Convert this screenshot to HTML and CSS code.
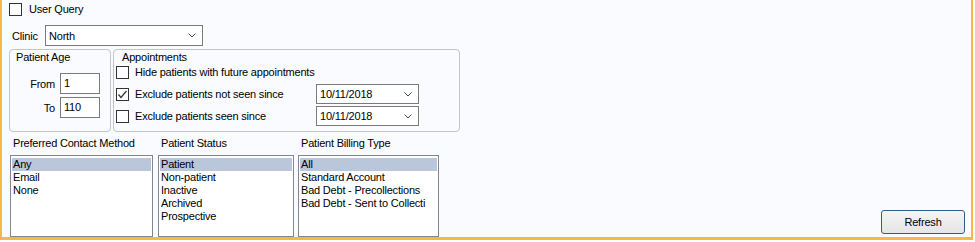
FILE: index.html
```html
<!DOCTYPE html>
<html lang="en">
<head>
  <meta charset="UTF-8">
  <title>Patient Query</title>
  <link rel="stylesheet" href="styles.css">
</head>
<body>

<div class="panel">
  <!-- User query toggle -->
  <div class="row-query">
    <span class="check"></span>
    <span>User Query</span>
  </div>

  <!-- Clinic -->
  <div class="row-clinic">
    <span class="clinic-label">Clinic</span>
    <div class="combo clinic-combo">
      <span>North</span>
      <svg class="chev" width="8" height="5" viewBox="0 0 8 5"><polyline points="0.5,0.5 4,4 7.5,0.5" fill="none" stroke="#444" stroke-width="1"/></svg>
    </div>
  </div>

  <!-- Groups -->
  <div class="row-groups">
    <div class="group age-group">
      <div class="group-title">Patient Age</div>
      <div class="age-line">
        <span class="age-label">From</span>
        <div class="textbox">1</div>
      </div>
      <div class="age-line">
        <span class="age-label">To</span>
        <div class="textbox">110</div>
      </div>
    </div>

    <div class="group appt-group">
      <div class="group-title">Appointments</div>
      <div class="appt-line">
        <span class="check"></span>
        <span>Hide patients with future appointments</span>
      </div>
      <div class="appt-line">
        <span class="check">
          <svg width="11" height="11" viewBox="0 0 11 11"><polyline points="1.5,5.5 4,8.5 9.5,2" fill="none" stroke="#333" stroke-width="1.2"/></svg>
        </span>
        <span class="appt-text">Exclude patients not seen since</span>
        <div class="combo date-combo">
          <span>10/11/2018</span>
          <svg class="chev" width="8" height="5" viewBox="0 0 8 5"><polyline points="0.5,0.5 4,4 7.5,0.5" fill="none" stroke="#444" stroke-width="1"/></svg>
        </div>
      </div>
      <div class="appt-line">
        <span class="check"></span>
        <span class="appt-text">Exclude patients seen since</span>
        <div class="combo date-combo">
          <span>10/11/2018</span>
          <svg class="chev" width="8" height="5" viewBox="0 0 8 5"><polyline points="0.5,0.5 4,4 7.5,0.5" fill="none" stroke="#444" stroke-width="1"/></svg>
        </div>
      </div>
    </div>
  </div>

  <!-- Lists and refresh -->
  <div class="row-lists">
    <div class="list-col contact-col">
      <div class="list-label">Preferred Contact Method</div>
      <div class="listbox">
        <div class="item selected">Any</div>
        <div class="item">Email</div>
        <div class="item">None</div>
      </div>
    </div>
    <div class="list-col status-col">
      <div class="list-label">Patient Status</div>
      <div class="listbox">
        <div class="item selected">Patient</div>
        <div class="item">Non-patient</div>
        <div class="item">Inactive</div>
        <div class="item">Archived</div>
        <div class="item">Prospective</div>
      </div>
    </div>
    <div class="list-col billing-col">
      <div class="list-label">Patient Billing Type</div>
      <div class="listbox">
        <div class="item selected">All</div>
        <div class="item">Standard Account</div>
        <div class="item">Bad Debt - Precollections</div>
        <div class="item">Bad Debt - Sent to Collecti</div>
      </div>
    </div>
    <button class="refresh-btn">Refresh</button>
  </div>
</div>

</body>
</html>
```

FILE: styles.css
```css
body {
  margin: 0;
  background-color: #ffffff;
  font-family: "Liberation Sans", Arial, sans-serif;
  font-size: 11px;
  letter-spacing: -0.2px;
  color: #000;
}

.panel {
  box-sizing: border-box;
  width: 973px;
  height: 240px;
  background-color: #f9fbfe;
  border-left: 2px solid #fbb746;
  border-right: 2px solid #fbb746;
  border-bottom: 3px solid #fbb746;
  display: flex;
  flex-direction: column;
}

.check {
  box-sizing: border-box;
  width: 13px;
  height: 13px;
  border: 1px solid #333;
  background-color: #fff;
  display: flex;
  align-items: center;
  justify-content: center;
  flex-shrink: 0;
}

/* row 1 */
.row-query {
  display: flex;
  align-items: center;
  gap: 7px;
  height: 13px;
  margin-top: 3px;
  padding-left: 7px;
  line-height: 13px;
}

/* row 2 */
.row-clinic {
  display: flex;
  align-items: center;
  height: 21px;
  margin-top: 9px;
  padding-left: 10px;
}

.clinic-label {
  width: 33px;
}

.combo {
  box-sizing: border-box;
  background-color: #fff;
  border: 1px solid #7a7a7a;
  display: flex;
  align-items: center;
  justify-content: space-between;
  padding: 0 6px 0 3px;
}

.clinic-combo {
  width: 158px;
  height: 21px;
}

/* row 3 */
.row-groups {
  display: flex;
  gap: 2px;
  margin-top: 3px;
  padding-left: 7px;
  height: 83px;
}

.group {
  box-sizing: border-box;
  border: 1px solid #c4c4c4;
  border-radius: 4px;
  height: 83px;
}

.group-title {
  line-height: 13px;
  margin-top: 1px;
  padding-left: 6px;
}

.age-group {
  width: 102px;
}

.age-line {
  display: flex;
  align-items: center;
  margin-top: 3px;
}

.age-group .group-title + .age-line {
  margin-top: 9px;
}

.age-label {
  width: 45px;
  text-align: right;
  margin-right: 5px;
}

.textbox {
  box-sizing: border-box;
  width: 40px;
  height: 21px;
  background-color: #fff;
  border: 1px solid #7a7a7a;
  padding-left: 3px;
  line-height: 19px;
}

.appt-group {
  width: 347px;
  padding-left: 2px;
}

.appt-line {
  display: flex;
  align-items: center;
  gap: 6px;
  height: 20px;
  margin-top: 2px;
}

.appt-group .group-title + .appt-line {
  margin-top: -2px;
}

.appt-text {
  width: 175px;
}

.date-combo {
  width: 103px;
  height: 20px;
}

/* row 4 */
.row-lists {
  display: flex;
  align-items: flex-end;
  margin-top: 5px;
  padding-left: 8px;
}

.list-col {
  display: flex;
  flex-direction: column;
}

.list-label {
  line-height: 13px;
  padding-left: 3px;
  margin-bottom: 5px;
}

.listbox {
  box-sizing: border-box;
  height: 82px;
  background-color: #fff;
  border: 1px solid #82878f;
  padding: 2px 1px;
  overflow: hidden;
}

.item {
  line-height: 13px;
  height: 13px;
  padding-left: 1px;
  white-space: nowrap;
}

.item.selected {
  background-color: #bac6da;
}

.contact-col {
  width: 143px;
}

.status-col {
  width: 136px;
  margin-left: 5px;
}

.billing-col {
  width: 141px;
  margin-left: 4px;
}

.refresh-btn {
  margin-left: auto;
  margin-right: 6px;
  margin-bottom: 3px;
  width: 84px;
  height: 24px;
  border: 1px solid #2f5d87;
  border-radius: 3px;
  background: linear-gradient(#f4f4f4, #e5e5e5);
  font-family: "Liberation Sans", Arial, sans-serif;
  font-size: 11px;
  letter-spacing: -0.2px;
  color: #000;
  padding: 0;
}
```
